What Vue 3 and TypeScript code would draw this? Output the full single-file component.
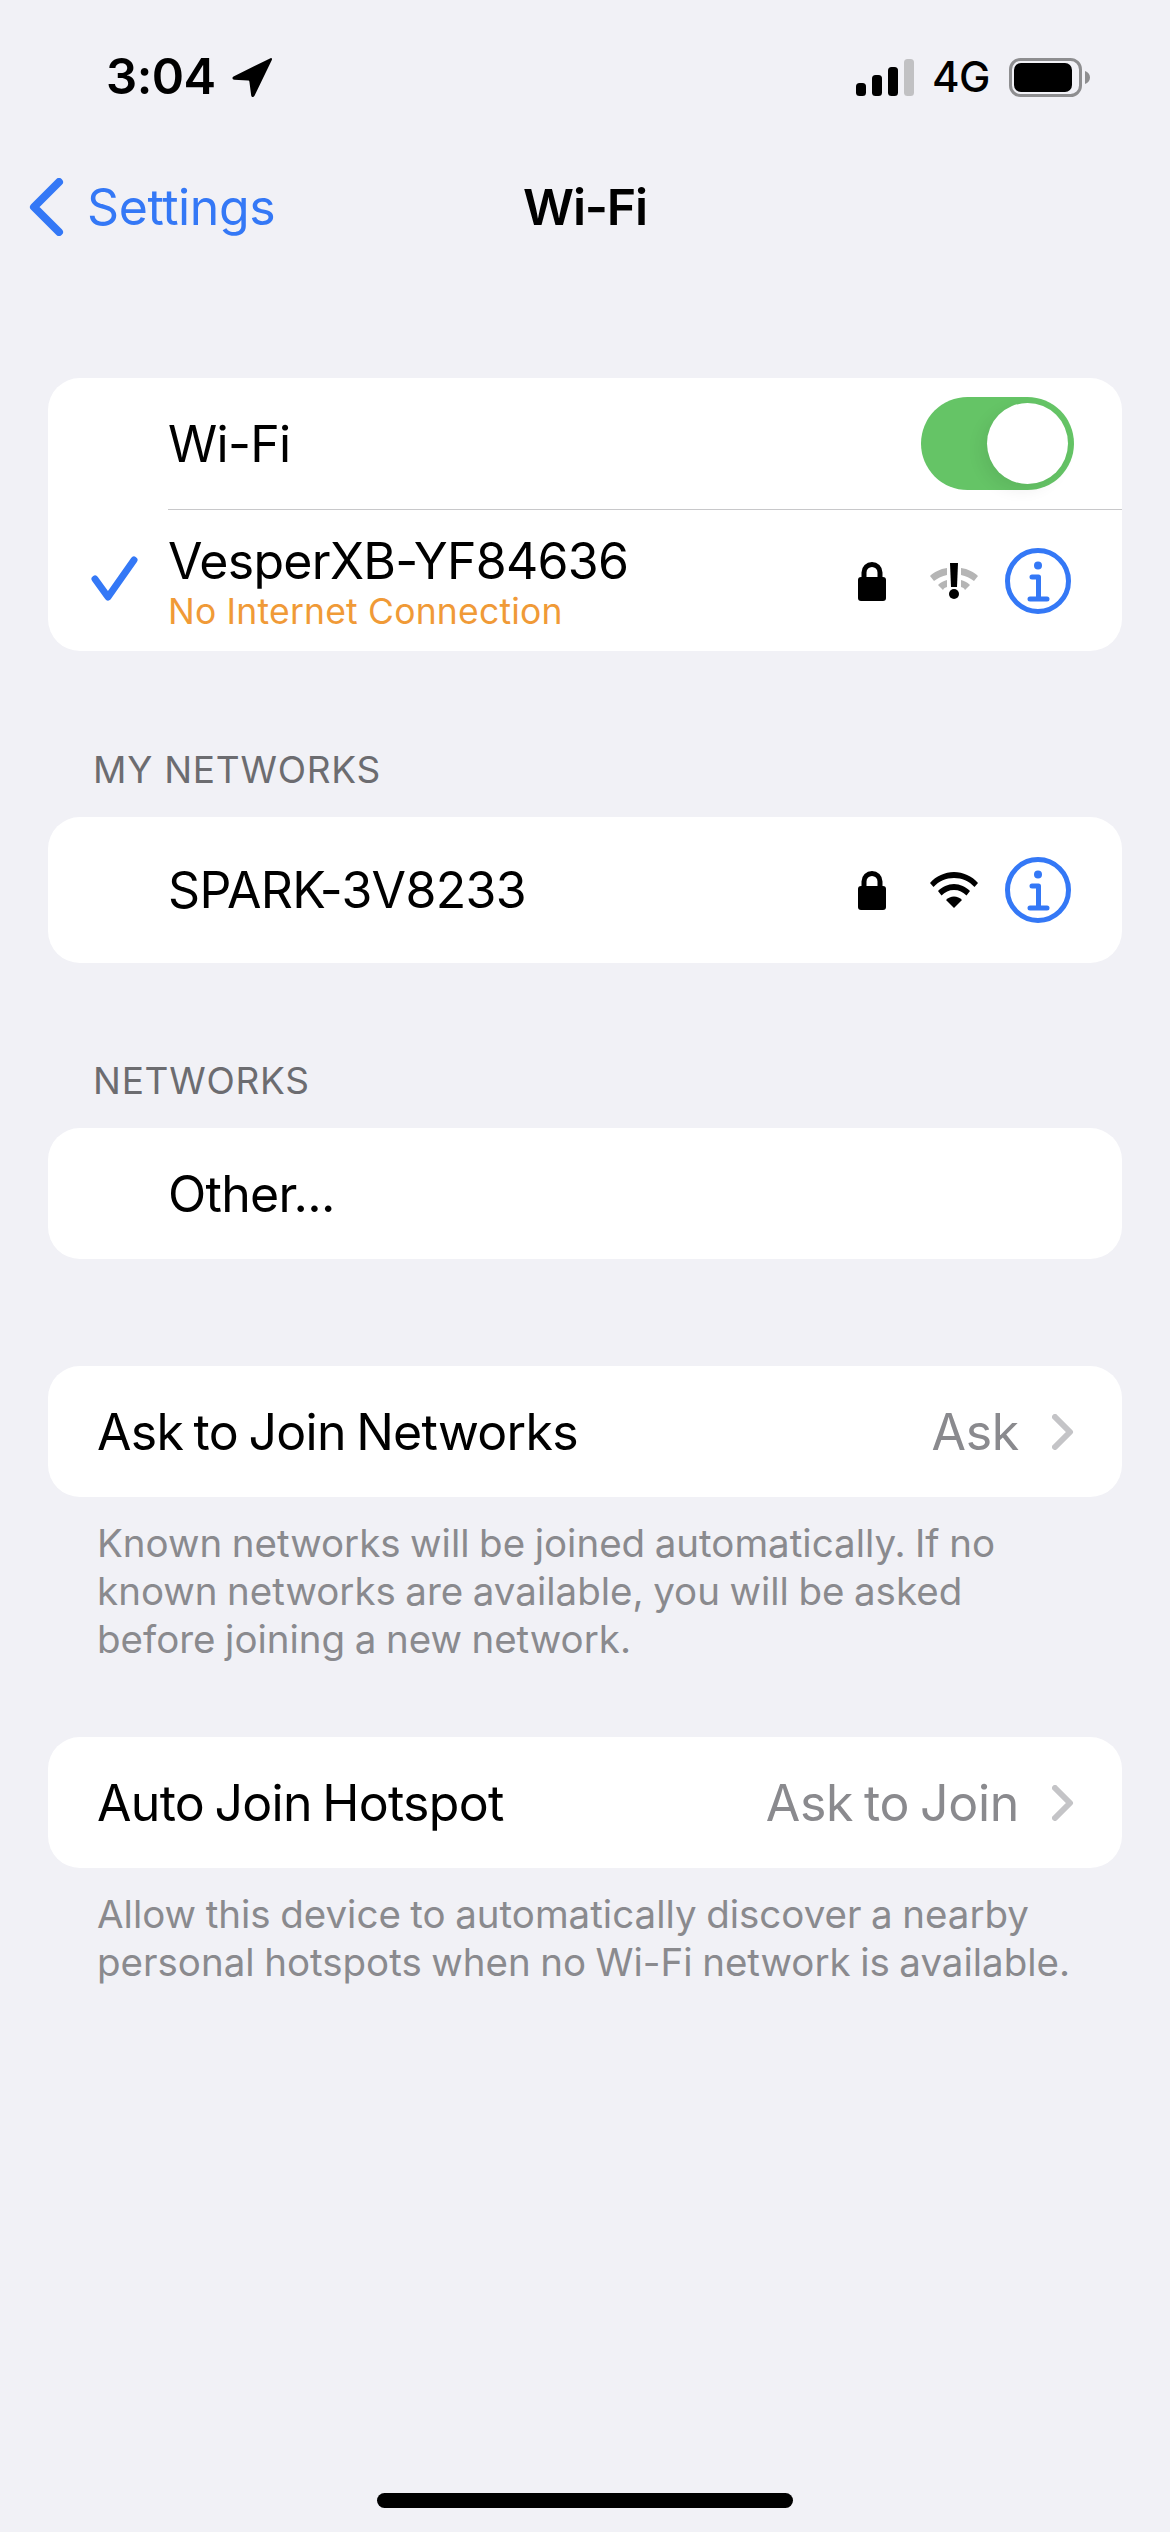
<script setup lang="ts">
interface Row { label: string; value: string; note: string[] }
const joinRows: Row[] = [
  { label: 'Ask to Join Networks', value: 'Ask', note: ['Known networks will be joined automatically. If no', 'known networks are available, you will be asked', 'before joining a new network.'] },
  { label: 'Auto Join Hotspot', value: 'Ask to Join', note: ['Allow this device to automatically discover a nearby', 'personal hotspots when no Wi-Fi network is available.'] },
]
</script>

<template>
  <div class="page">
    <header class="status">
      <div class="status-left">
        <span class="time">3:04</span>
        <svg class="arrow" viewBox="0 0 40 40"><path d="M38.5 1.2 1.5 19.5c-1.800 1-1.200 3.200.8 3.300l13.600.6c.9 0 1.400.5 1.500 1.400l1.800 13.600c.3 2 2.500 2.200 3.300.4L39.800 3c.6-1.400-.2-2.400-1.300-1.800Z" /></svg>
      </div>
      <div class="status-right">
        <svg class="signal" viewBox="0 0 58 37">
          <rect x="0" y="24" width="10" height="13" rx="3.500" fill="#000" />
          <rect x="16" y="16" width="10" height="21" rx="3.500" fill="#000" />
          <rect x="32" y="8" width="10" height="29" rx="3.500" fill="#000" />
          <rect x="48" y="0" width="10" height="37" rx="3.500" fill="#c1c1c3" />
        </svg>
        <span class="net">4G</span>
        <svg class="battery" viewBox="0 0 81 39">
          <rect x="1.500" y="1.500" width="70" height="36" rx="10" fill="none" stroke="#8e8e90" stroke-width="3" />
          <rect x="5" y="5" width="58" height="29" rx="7" fill="#000" />
          <path d="M76 13c3 1 5 3.500 5 6.500S79 25 76 26Z" fill="#8e8e90" />
        </svg>
      </div>
    </header>

    <nav class="nav">
      <div class="back">
        <svg class="chev" viewBox="0 0 36 58"><path d="M31 4 6 29l25 25" /></svg>
        <span>Settings</span>
      </div>
      <div class="title">Wi-Fi</div>
    </nav>

    <section class="card first">
      <div class="row toggle-row">
        <span class="indented label">Wi-Fi</span>
        <div class="switch"><div class="knob"></div></div>
      </div>
      <div class="sep"></div>
      <div class="row current">
        <svg class="check" viewBox="0 0 48 46"><path d="M4 23 17 41 43 4" /></svg>
        <div class="stack">
          <span class="label">VesperXB-YF84636</span>
          <span class="warn">No Internet Connection</span>
        </div>
        <div class="icons">
          <svg class="lock" viewBox="0 0 28 40"><path class="solid" d="M3 16h22a3 3 0 0 1 3 3v18a3 3 0 0 1-3 3H3a3 3 0 0 1-3-3V19a3 3 0 0 1 3-3Z" /><path class="shackle" d="M6 18v-6.500a8 8 0 0 1 16 0V18" /></svg>
          <svg class="wifi" viewBox="0 0 48 36">
            <g fill="#b5b5b5">
              <path d="M0 13C4 9 10 6 17 5v7C12 13 8 15 4 18Z" />
              <path d="M48 13C44 9 38 6 31 5v7c5 1 9 3 13 6Z" />
              <path d="M8 22c3-3 6-4 9-5v7c-2 .5-3 1-4 3Z" />
              <path d="M40 22c-3-3-6-4-9-5v7c2 .5 3 1 4 3Z" />
            </g>
            <path d="M20 0h8l-1 24h-6Z" fill="#000" /><circle cx="24" cy="31" r="5" fill="#000" />
          </svg>
          <svg class="info" viewBox="0 0 66 66"><circle cx="33" cy="33" r="30.500" /><circle class="dot" cx="33" cy="17.500" r="4" /><path d="M27 29h6.500v21M25 51h17" /></svg>
        </div>
      </div>
    </section>

    <div class="heading my">MY NETWORKS</div>
    <section class="card network">
      <div class="row net-row">
        <span class="indented label">SPARK-3V8233</span>
        <div class="icons">
          <svg class="lock" viewBox="0 0 28 40"><path class="solid" d="M3 16h22a3 3 0 0 1 3 3v18a3 3 0 0 1-3 3H3a3 3 0 0 1-3-3V19a3 3 0 0 1 3-3Z" /><path class="shackle" d="M6 18v-6.500a8 8 0 0 1 16 0V18" /></svg>
          <svg class="wifi" viewBox="0 0 48 36">
            <path d="M0 11C6 4 15 0 24 0s18 4 24 11l-3.500 4C39 9 32 6 24 6S9 9 3.500 15Z" />
            <path d="M8 19c4-4 10-7 16-7s12 3 16 7l-3.500 4.500C33 20 29 18 24 18s-9 2-12.500 5.500Z" />
            <path d="M16 28c2-2 5-3.500 8-3.500s6 1.500 8 3.500l-8 8Z" />
          </svg>
          <svg class="info" viewBox="0 0 66 66"><circle cx="33" cy="33" r="30.500" /><circle class="dot" cx="33" cy="17.500" r="4" /><path d="M27 29h6.500v21M25 51h17" /></svg>
        </div>
      </div>
    </section>

    <div class="heading others">NETWORKS</div>
    <section class="card other">
      <div class="row plain"><span class="indented label">Other...</span></div>
    </section>

    <template v-for="(r, i) in joinRows" :key="r.label">
      <section class="card join" :class="i === 0 ? 'join-first' : 'join-second'">
        <div class="row plain">
          <span class="label flush">{{ r.label }}</span>
          <span class="value">{{ r.value }}</span>
          <svg class="disclosure" viewBox="0 0 22 36"><path d="M3 3l15 15L3 33" /></svg>
        </div>
      </section>
      <div class="note">
        <div v-for="line in r.note" :key="line">{{ line }}</div>
      </div>
    </template>

    <div class="spacer"></div>
    <div class="home"></div>
  </div>
</template>

<style>
html, body { margin: 0; background: #f1f1f6; }
</style>

<style scoped>
.page { width: 1170px; height: 2532px; background: #f1f1f6; font-family: Inter, "Liberation Sans", sans-serif; color: #000; display: flex; flex-direction: column; overflow: hidden; }
svg { display: block; flex: none; }

.status { height: 98px; padding-top: 56px; box-sizing: border-box; display: flex; justify-content: space-between; align-items: center; padding-left: 106px; padding-right: 80px; flex: none; }
.status-left { display: flex; align-items: center; gap: 16px; }
.time { font-size: 49px; font-weight: 600; line-height: 46px; letter-spacing: -0.5px; }
.arrow { width: 40px; height: 40px; fill: #000; }
.status-right { display: flex; align-items: center; }
.signal { width: 58px; height: 37px; }
.net { font-size: 42px; font-weight: 500; line-height: 40px; margin-left: 18px; margin-right: 19px; letter-spacing: -0.5px; }
.battery { width: 81px; height: 39px; }

.nav { flex: none; height: 110px; margin-top: 54px; display: flex; align-items: center; position: relative; }
.back { display: flex; align-items: center; color: #3478f6; font-size: 50px; padding-left: 28px; gap: 23px; letter-spacing: -0.4px; }
.chev { width: 36px; height: 58px; fill: none; stroke: #3478f6; stroke-width: 8; stroke-linecap: round; stroke-linejoin: round; }
.title { position: absolute; left: 0; right: 0; text-align: center; font-size: 50px; font-weight: 600; letter-spacing: -1.2px; }

.card { margin: 0 48px; background: #fff; border-radius: 32px; flex: none; }
.first { margin-top: 116px; height: 273px; display: flex; flex-direction: column; }
.row { display: flex; align-items: center; box-sizing: border-box; }
.label { font-size: 50px; line-height: 60px; letter-spacing: -0.7px; word-spacing: -3px; }
.indented { margin-left: 120px; }
.flush { margin-left: 49px; flex: 1; }
.toggle-row { height: 131px; justify-content: space-between; padding-right: 48px; }
.switch { width: 153px; height: 93px; border-radius: 47px; background: #65c466; display: flex; align-items: center; justify-content: flex-end; padding-right: 6px; box-sizing: border-box; }
.knob { width: 81px; height: 81px; border-radius: 50%; background: #fff; box-shadow: -6px 6px 16px rgba(0, 0, 0, 0.07); }
.sep { height: 1px; margin-left: 120px; background: #c8c8ca; flex: none; }
.current { flex: 1; position: relative; padding-left: 120px; padding-right: 51px; }
.check { position: absolute; left: 43px; top: 46px; width: 48px; height: 46px; fill: none; stroke: #3478f6; stroke-width: 7; stroke-linecap: round; stroke-linejoin: round; }
.stack { display: flex; flex-direction: column; flex: 1; margin-top: 3px; }
.warn { font-size: 35.500px; line-height: 42px; color: #f09a37; margin-top: 0; letter-spacing: 0.2px; }
.icons { display: flex; align-items: center; margin-left: auto; }
.lock { width: 28px; height: 40px; }
.lock .solid { fill: #000; }
.lock .shackle { fill: none; stroke: #000; stroke-width: 5; }
.wifi { width: 48px; height: 36px; margin-left: 44px; fill: #000; }
.info { width: 66px; height: 66px; margin-left: 27px; fill: none; stroke: #3478f6; stroke-width: 5; stroke-linecap: round; stroke-linejoin: round; }
.info .dot { fill: #3478f6; stroke: none; }

.heading { flex: none; font-size: 37px; line-height: 44px; color: #6c6c70; margin-left: 93px; letter-spacing: 0.75px; }
.my { margin-top: 97px; }
.others { margin-top: 96px; }
.network { margin-top: 25px; height: 146px; }
.net-row { height: 146px; padding-right: 51px; }
.other { margin-top: 25px; height: 131px; }
.plain { height: 131px; padding-right: 48px; }
.join-first { margin-top: 107px; }
.join-second { margin-top: 74px; }
.value { font-size: 50px; color: #8a8a8e; letter-spacing: -0.3px; word-spacing: -3px; }
.disclosure { width: 22px; height: 36px; margin-left: 33px; fill: none; stroke: #c4c4c7; stroke-width: 6; stroke-linecap: round; stroke-linejoin: round; }
.note { flex: none; margin: 22px 48px 0; padding-left: 49px; font-size: 38.500px; line-height: 48px; color: #8a8a8e; word-spacing: -1.300px; }
.spacer { flex: 1; }
.home { flex: none; width: 416px; height: 15px; border-radius: 8px; background: #000; margin: 0 auto 24px; }
</style>
